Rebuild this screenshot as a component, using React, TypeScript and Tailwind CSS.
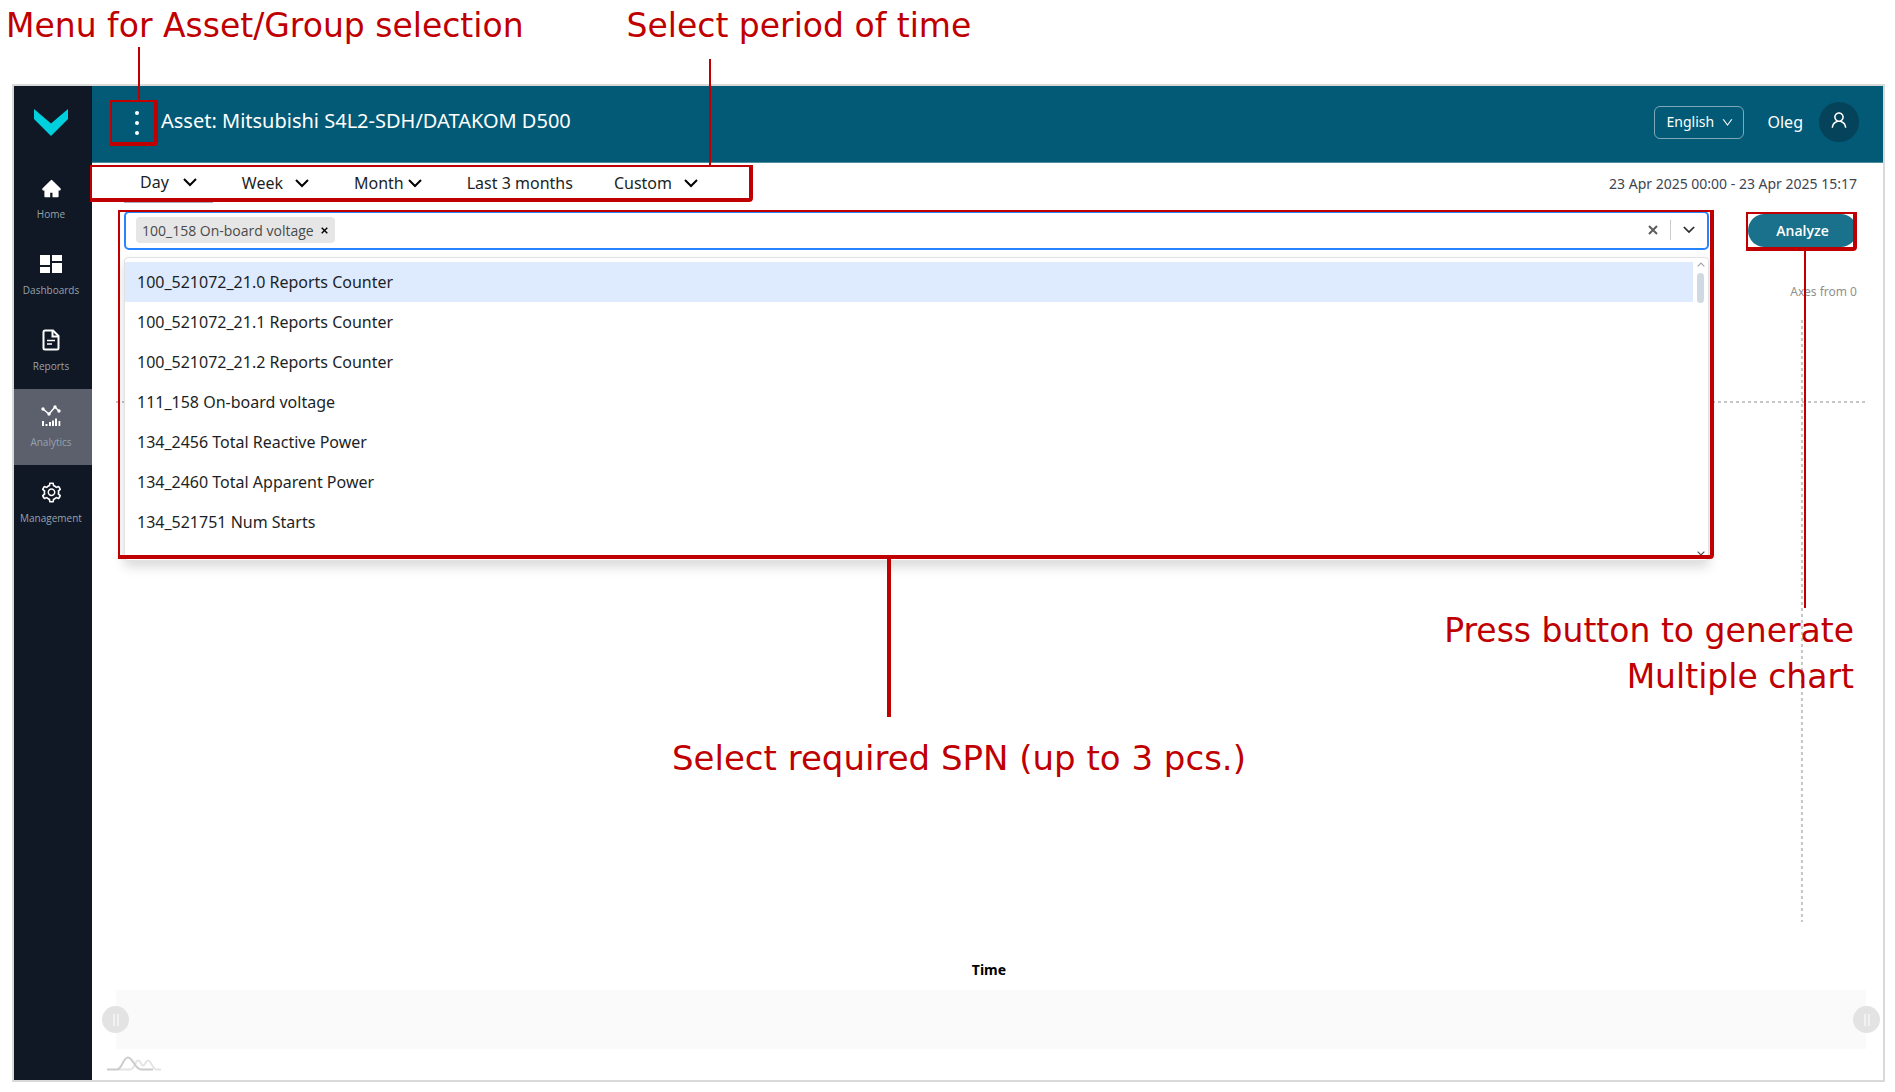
import { useState } from "react";
import { AiFillHome, AiOutlineDown, AiOutlineSetting, AiOutlineUser } from "react-icons/ai";

const periods = [
  { label: "Day", menu: true, className: "gap-[14px] px-4" },
  { label: "Week", menu: true, className: "gap-3 px-4" },
  { label: "Month", menu: true, className: "gap-1 px-4" },
  { label: "Last 3 months", menu: false, className: "pl-4 pr-3" },
  { label: "Custom", menu: true, className: "gap-3 px-4" },
];

const parameters = [
  "100_521072_21.0 Reports Counter",
  "100_521072_21.1 Reports Counter",
  "100_521072_21.2 Reports Counter",
  "111_158 On-board voltage",
  "134_2456 Total Reactive Power",
  "134_2460 Total Apparent Power",
  "134_521751 Num Starts",
];

const DashboardIcon = () => (
  <svg width="22" height="18" viewBox="0 0 22 18" fill="currentColor">
    <path d="M0 0h10v10H0zM0 12h10v6H0zM12 0h10v6H12zM12 8h10v10H12z" />
  </svg>
);

const ReportIcon = () => (
  <svg width="18" height="22" viewBox="0 0 18 22" fill="none" stroke="currentColor" strokeWidth="2">
    <path d="M3 1.5h8l5.5 5.5v12a1.5 1.5 0 0 1-1.5 1.5h-12a1.5 1.5 0 0 1-1.5-1.5v-16a1.5 1.5 0 0 1 1.5-1.5z" />
    <path d="M10.5 1.5v6h6" />
    <path d="M5 11.500h8M5 15h5" strokeWidth="1.5" />
  </svg>
);

const AnalyticsIcon = () => (
  <svg width="20" height="22" viewBox="0 0 20 22" fill="currentColor">
    <path d="M2 4l6 5 6-7 4 4" fill="none" stroke="currentColor" strokeWidth="1.5" />
    <circle cx="2" cy="4" r="1.7" />
    <circle cx="8" cy="9" r="1.7" />
    <circle cx="14" cy="2" r="1.7" />
    <circle cx="18" cy="6" r="1.7" />
    <path d="M1 16h2v5H1zM4.5 19h2v2h-2zM8 17h2v4H8zM11 15.5h2v5.5h-2zM14 13.5h2v7.5h-2zM17.5 16h1.8v5h-1.8z" />
  </svg>
);

const navItems = [
  { label: "Home", icon: <AiFillHome size={21} /> },
  { label: "Dashboards", icon: <DashboardIcon /> },
  { label: "Reports", icon: <ReportIcon /> },
  { label: "Analytics", icon: <AnalyticsIcon /> },
  { label: "Management", icon: <AiOutlineSetting size={23} /> },
];

const Chevron = ({ className }: { className: string }) => (
  <svg className={className} viewBox="0 0 14 9" fill="none" stroke="currentColor" strokeWidth="2">
    <path d="M1 1l6 6 6-6" />
  </svg>
);

const Cross = ({ className }: { className: string }) => (
  <svg className={className} viewBox="0 0 10 10" fill="none" stroke="currentColor" strokeWidth="2">
    <path d="M1 1l8 8M9 1l-8 8" />
  </svg>
);

// Red frame drawn around a control
const Frame = ({ className }: { className: string }) => (
  <span
    className={`pointer-events-none absolute rounded-br-sm border-2 border-r-4 border-b-4 border-[#c00000] ${className}`}
  />
);

// Line from a frame to its caption
const Pointer = ({ className }: { className: string }) => (
  <span className={`pointer-events-none absolute bg-[#c00000] ${className}`} />
);

const Sidebar = () => (
  <aside className="w-[78px] shrink-0 bg-[#101725]">
    <div className="flex h-[75px] justify-center pt-[23px] pr-4">
      <svg className="ml-3 h-[27px] w-[34px]" viewBox="0 0 34 27" fill="#00cfde">
        <path d="M0 0l17 14.5L34 0v10L17 27 0 10z" />
      </svg>
    </div>
    <nav>
      {navItems.map((item) => (
        <a
          key={item.label}
          href="#"
          className={`flex h-[76px] flex-col items-center pt-[15px] pr-1 text-white ${
            item.label === "Analytics" ? "bg-[#5c5f6c]" : ""
          }`}
        >
          <span className="flex h-6 items-center">{item.icon}</span>
          <span className="mt-2 font-['Open_Sans',sans-serif] text-[10px] leading-3 text-[#95a3ad]">{item.label}</span>
        </a>
      ))}
    </nav>
  </aside>
);

const Header = () => (
  <header className="flex h-[77px] items-center border-b border-[#4d8b9f] bg-[#025a76] pr-[24px] pb-1 text-white">
    <div className="relative mt-[2px] ml-[18px] h-[46px] w-[48px]">
      <button aria-label="Select asset" className="flex h-full w-full items-center justify-center pl-[6px]">
        <svg width="4" height="24" viewBox="0 0 4 24" fill="currentColor">
          <circle cx="2" cy="2" r="2" />
          <circle cx="2" cy="12" r="2" />
          <circle cx="2" cy="22" r="2" />
        </svg>
      </button>
      <Frame className="inset-0" />
      <Pointer className="bottom-full left-[28px] h-[53px] w-[2px]" />
    </div>
    <h1 className="ml-[3px] pb-[2px] text-[20px] leading-7">Asset: Mitsubishi S4L2-SDH/DATAKOM D500</h1>
    <div className="relative ml-auto">
      <select
        aria-label="Language"
        className="h-[33px] w-[90px] appearance-none rounded-md border border-[#7fa9b8] bg-transparent pb-[1px] pl-3 text-[14px]"
      >
        <option>English</option>
      </select>
      <AiOutlineDown className="pointer-events-none absolute top-[10px] right-[10px]" size={13} />
    </div>
    <span className="ml-[24px] text-[16px]">Oleg</span>
    <button
      aria-label="Account"
      className="ml-4 flex h-10 w-10 items-center justify-center rounded-full bg-[#04435a] pb-1"
    >
      <AiOutlineUser size={20} />
    </button>
  </header>
);

const PeriodBar = () => {
  const [active, setActive] = useState("Day");

  return (
    <div className="flex h-10 items-center justify-between pr-[26px]">
      <div className="relative flex h-full w-[661px] gap-[13px] pl-8">
        {periods.map((period) => (
          <button
            key={period.label}
            onClick={() => setActive(period.label)}
            className={`flex items-center text-[16px] text-[#1c1f26] ${period.className} ${
              active === period.label ? "border-b-2 border-[#a9adbd]" : ""
            }`}
          >
            {period.label}
            {period.menu && <Chevron className="h-[9px] w-[14px] text-black" />}
          </button>
        ))}
        <Frame className="top-[2px] right-0 -left-[2px] h-[37px]" />
        <Pointer className="-top-[104px] left-[617px] h-[106px] w-[2px]" />
      </div>
      <p className="text-[14px] text-[#41444f]">23 Apr 2025 00:00 - 23 Apr 2025 15:17</p>
    </div>
  );
};

const ParameterSelect = () => {
  const [focused, setFocused] = useState(parameters[0]);

  return (
    <div className="relative z-10 min-w-0 flex-1">
      <div className="flex h-[39px] items-center rounded-[5px] border-2 border-[#2684ff] bg-white pr-3 pb-[1px] pl-[10px]">
        <span className="flex h-[26px] items-center rounded-sm bg-[#e6e6e6] pl-[6px] font-['Open_Sans',sans-serif] text-[14px] text-[#4a4a4a]">
          100_158 On-board voltage
          <button aria-label="Remove 100_158 On-board voltage" className="px-[7px] text-black">
            <Cross className="h-[7px] w-[7px]" />
          </button>
        </span>
        <input aria-label="Parameters" className="mx-1 min-w-0 flex-1 outline-none" />
        <button aria-label="Clear all" className="text-[#5c5c5c]">
          <Cross className="h-[10px] w-[10px]" />
        </button>
        <span className="mx-3 h-5 w-px bg-[#cccccc]" />
        <button aria-label="Open list" className="text-[#2b2b2b]">
          <Chevron className="h-[8px] w-[12px]" />
        </button>
      </div>

      <div className="absolute top-full right-0 left-0 mt-[7px] flex h-[304px] overflow-hidden rounded-[4px] border border-[#e2e2e2] bg-white pt-1 shadow-[0_6px_12px_rgba(0,0,0,0.15)]">
        <ul role="listbox" aria-label="Parameters" className="flex-1">
          {parameters.map((name) => (
            <li
              key={name}
              role="option"
              aria-selected={focused === name}
              onMouseEnter={() => setFocused(name)}
              className={`flex h-10 items-center px-3 text-[16px] text-[#1c1f26] ${
                focused === name ? "bg-[#deebff]" : ""
              }`}
            >
              {name}
            </li>
          ))}
        </ul>
        <div className="flex w-[15px] flex-col items-center pb-1">
          <Chevron className="h-[5px] w-[8px] rotate-180 text-[#a3a3a3]" />
          <span className="mt-[6px] h-[30px] w-[7px] rounded-full bg-[#cfd9e2]" />
          <Chevron className="mt-auto h-[5px] w-[8px] text-[#4a4a4a]" />
        </div>
      </div>

      <Frame className="-top-[1px] -right-[5px] -left-[6px] h-[349px]" />
      <Pointer className="top-[348px] left-[763px] h-[158px] w-[4px]" />
      <p className="absolute top-[527px] left-[548px] font-['DejaVu_Sans',sans-serif] text-[34px] leading-10 whitespace-nowrap text-[#c00000]">
        Select required SPN (up to 3 pcs.)
      </p>
    </div>
  );
};

const AnalyzeButton = () => (
  <div className="relative ml-[39px] shrink-0 pt-[3px]">
    <button className="h-[33px] w-[109px] rounded-full bg-[#19718c] pb-[1px] font-['Open_Sans',sans-serif] text-[14px] font-semibold text-white">
      Analyze
    </button>
    <Frame className="top-[1px] right-0 -left-[2px] h-[39px]" />
    <Pointer className="top-[39px] left-[56px] h-[358px] w-[2px]" />
    <p className="absolute top-[397px] right-[3px] text-right font-['DejaVu_Sans',sans-serif] text-[33px] leading-[46px] whitespace-nowrap text-[#c00000]">
      Press button to generate
      <br />
      Multiple chart
    </p>
  </div>
);

const Grip = ({ className }: { className: string }) => (
  <button
    aria-label="Adjust range"
    className={`absolute top-4 flex h-[27px] w-[27px] items-center justify-center gap-[2px] rounded-full bg-[#e3e3e3] ${className}`}
  >
    <span className="h-3 w-[2px] bg-[#f2f2f2]" />
    <span className="h-3 w-[2px] bg-[#f2f2f2]" />
  </button>
);

const Chart = () => (
  <section className="flex flex-1 flex-col pr-[17px] pl-6">
    <svg className="min-h-[320px] w-full flex-1" stroke="#c6c6c6" strokeWidth="2" strokeDasharray="3 3">
      <line x1="0" y1="82" x2="100%" y2="82" />
      <line x1="96.34%" y1="0" x2="96.34%" y2="100%" />
    </svg>
    <p className="mt-[38px] pr-1 text-center text-[14px] leading-5 font-bold text-black">Time</p>
    <div className="relative mt-[10px] h-[59px] bg-[#fafafa]">
      <Grip className="-left-[14px]" />
      <Grip className="-right-[14px]" />
    </div>
    <svg className="mt-[7px] mb-2 -ml-[10px] h-4 w-14" viewBox="0 0 56 16" fill="none" strokeWidth="2">
      <path d="M12 13.500h12c5 0 5-9 8-9s3 5 5 5 3-5 5-5c3 0 5 9 8 9h5" stroke="#e4e4e4" />
      <path d="M1 13.500h10c5 0 6-12 11-12s7 12 13 12h12" stroke="#cccccc" />
    </svg>
  </section>
);

const App = () => (
  <div className="flex min-h-screen flex-col bg-white pr-[10px] pb-[10px] pl-3 font-['Noto_Sans',sans-serif]">
    <div className="-ml-[6px] flex h-[84px] gap-[103px] pt-[6px] font-['DejaVu_Sans',sans-serif] text-[33px] leading-10 whitespace-nowrap text-[#c00000]">
      <p>Menu for Asset/Group selection</p>
      <p>Select period of time</p>
    </div>
    <div className="flex flex-1 border-2 border-[#d9d9d9]">
      <Sidebar />
      <main className="flex min-w-0 flex-1 flex-col">
        <Header />
        <PeriodBar />
        <div className="mt-2 flex pr-[26px] pl-8">
          <ParameterSelect />
          <AnalyzeButton />
        </div>
        <p className="mt-8 mb-[18px] pr-[26px] text-right text-[12px] leading-5 text-[#8f8f8f]">Axes from 0</p>
        <Chart />
      </main>
    </div>
  </div>
);

export default App;
